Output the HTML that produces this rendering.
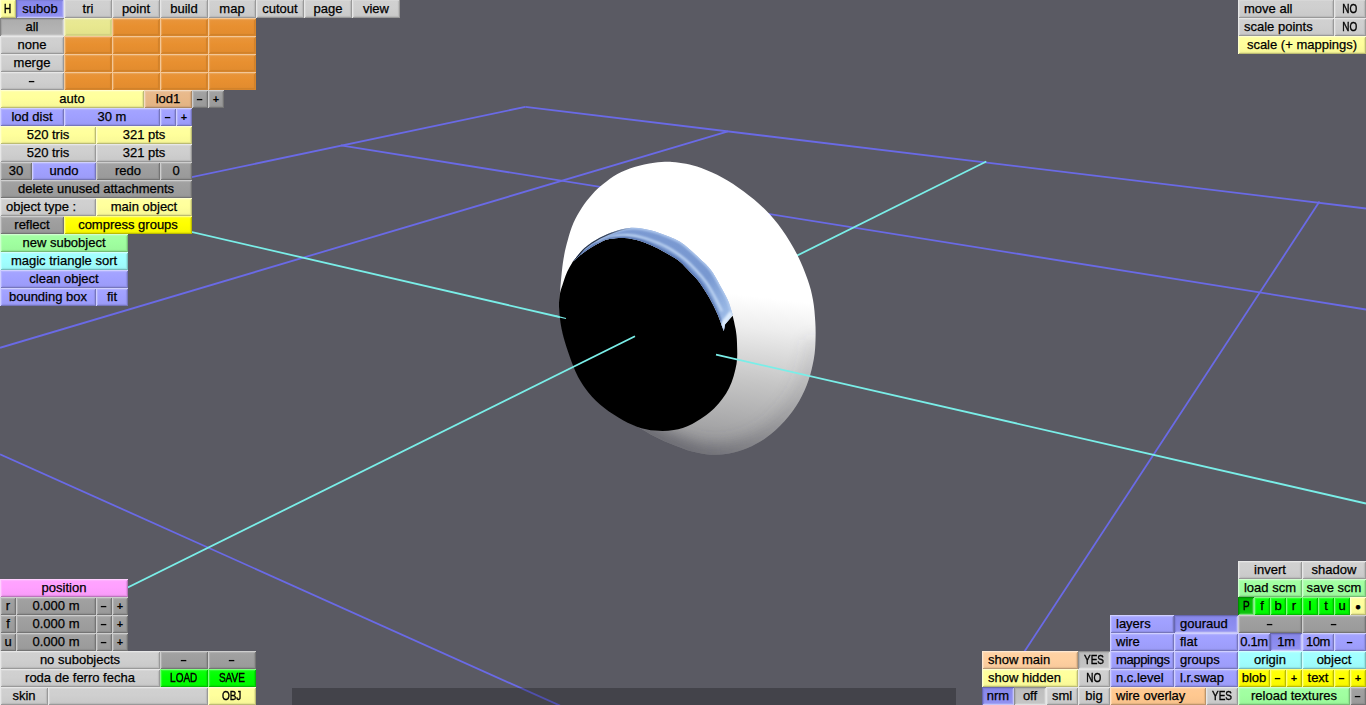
<!DOCTYPE html>
<html><head><meta charset="utf-8"><title>editor</title>
<style>
html,body{margin:0;padding:0}
body{width:1366px;height:705px;overflow:hidden;background:#5a5a63;position:relative;font-family:"Liberation Sans",sans-serif;font-size:13px;color:#000}
#scene{position:absolute;left:0;top:0}
.b{position:absolute;height:18px;box-sizing:border-box;text-align:center;-webkit-text-stroke:0.25px;line-height:18px;white-space:nowrap;overflow:hidden;letter-spacing:0}
.l{text-align:left;padding-left:6px}
.u{display:inline-block;transform:scaleX(.77);-webkit-text-stroke:.45px}
.p{font-size:11px;font-weight:bold;-webkit-text-stroke:0}
.n{display:inline-block;transform:scaleX(.85);font-weight:bold;-webkit-text-stroke:0}
.cg{background:linear-gradient(#d1d1d1,#cfcfcf 45%,#c8c8c8);box-shadow:inset 1px 1px 0 #e7e7e7,inset -1px -1px 0 #999999,inset 2px 2px 1px #d8d8d8,inset -2px -2px 1px #bababa}
.cg.pr{background:linear-gradient(#c8c8c8,#cfcfcf 55%,#d1d1d1);box-shadow:inset 1px 1px 0 #999999,inset -1px -1px 0 #e7e7e7,inset 2px 2px 1px #bababa,inset -2px -2px 1px #d8d8d8}
.cd{background:linear-gradient(#a3a3a3,#9e9e9e 45%,#999999);box-shadow:inset 1px 1px 0 #cecece,inset -1px -1px 0 #747474,inset 2px 2px 1px #b1b1b1,inset -2px -2px 1px #8e8e8e}
.cd.pr{background:linear-gradient(#999999,#9e9e9e 55%,#a3a3a3);box-shadow:inset 1px 1px 0 #747474,inset -1px -1px 0 #cecece,inset 2px 2px 1px #8e8e8e,inset -2px -2px 1px #b1b1b1}
.cm{background:linear-gradient(#c5c5c5,#c2c2c2 45%,#bcbcbc);box-shadow:inset 1px 1px 0 #e0e0e0,inset -1px -1px 0 #8f8f8f,inset 2px 2px 1px #cecece,inset -2px -2px 1px #aeaeae}
.cm.pr{background:linear-gradient(#bcbcbc,#c2c2c2 55%,#c5c5c5);box-shadow:inset 1px 1px 0 #8f8f8f,inset -1px -1px 0 #e0e0e0,inset 2px 2px 1px #aeaeae,inset -2px -2px 1px #cecece}
.ca{background:linear-gradient(#b6b6b6,#b2b2b2 45%,#acacac);box-shadow:inset 1px 1px 0 #d8d8d8,inset -1px -1px 0 #838383,inset 2px 2px 1px #c1c1c1,inset -2px -2px 1px #a0a0a0}
.ca.pr{background:linear-gradient(#acacac,#b2b2b2 55%,#b6b6b6);box-shadow:inset 1px 1px 0 #838383,inset -1px -1px 0 #d8d8d8,inset 2px 2px 1px #a0a0a0,inset -2px -2px 1px #c1c1c1}
.cy{background:linear-gradient(#ffffa1,#ffff9c 45%,#f7f797);box-shadow:inset 1px 1px 0 #ffffcd,inset -1px -1px 0 #bcbc73,inset 2px 2px 1px #ffffaf,inset -2px -2px 1px #e5e58c}
.cy.pr{background:linear-gradient(#f7f797,#ffff9c 55%,#ffffa1);box-shadow:inset 1px 1px 0 #bcbc73,inset -1px -1px 0 #ffffcd,inset 2px 2px 1px #e5e58c,inset -2px -2px 1px #ffffaf}
.cy2{background:linear-gradient(#ffff0f,#ffff00 45%,#f7f700);box-shadow:inset 1px 1px 0 #ffff7f,inset -1px -1px 0 #bcbc00,inset 2px 2px 1px #ffff32,inset -2px -2px 1px #e5e500}
.cy2.pr{background:linear-gradient(#f7f700,#ffff00 55%,#ffff0f);box-shadow:inset 1px 1px 0 #bcbc00,inset -1px -1px 0 #ffff7f,inset 2px 2px 1px #e5e500,inset -2px -2px 1px #ffff32}
.cb{background:linear-gradient(#a5a5ff,#a0a0ff 45%,#9b9bf7);box-shadow:inset 1px 1px 0 #cfcfff,inset -1px -1px 0 #7676bc,inset 2px 2px 1px #b3b3ff,inset -2px -2px 1px #9090e5}
.cb.pr{background:linear-gradient(#9b9bf7,#a0a0ff 55%,#a5a5ff);box-shadow:inset 1px 1px 0 #7676bc,inset -1px -1px 0 #cfcfff,inset 2px 2px 1px #9090e5,inset -2px -2px 1px #b3b3ff}
.cb2{background:linear-gradient(#9292f0,#8c8cf0 45%,#8787e8);box-shadow:inset 1px 1px 0 #c5c5f7,inset -1px -1px 0 #6767b1,inset 2px 2px 1px #a3a3f3,inset -2px -2px 1px #7e7ed8}
.cb2.pr{background:linear-gradient(#8787e8,#8c8cf0 55%,#9292f0);box-shadow:inset 1px 1px 0 #6767b1,inset -1px -1px 0 #c5c5f7,inset 2px 2px 1px #7e7ed8,inset -2px -2px 1px #a3a3f3}
.co{background:linear-gradient(#e9963c,#e89030 45%,#e18b2e);box-shadow:inset 1px 1px 0 #f3c797,inset -1px -1px 0 #d7852c,inset 2px 2px 1px #eca659,inset -2px -2px 1px #d0812b}
.co.pr{background:linear-gradient(#e18b2e,#e89030 55%,#e9963c);box-shadow:inset 1px 1px 0 #d7852c,inset -1px -1px 0 #f3c797,inset 2px 2px 1px #d0812b,inset -2px -2px 1px #eca659}
.cly{background:linear-gradient(#e9e996,#e8e890 45%,#e1e18b);box-shadow:inset 1px 1px 0 #f3f3c7,inset -1px -1px 0 #d7d785,inset 2px 2px 1px #ececa6,inset -2px -2px 1px #d0d081}
.cly.pr{background:linear-gradient(#e1e18b,#e8e890 55%,#e9e996);box-shadow:inset 1px 1px 0 #d7d785,inset -1px -1px 0 #f3f3c7,inset 2px 2px 1px #d0d081,inset -2px -2px 1px #ececa6}
.ct{background:linear-gradient(#e9bc8f,#e8b888 45%,#e1b283);box-shadow:inset 1px 1px 0 #f3dbc3,inset -1px -1px 0 #ab8864,inset 2px 2px 1px #ecc69f,inset -2px -2px 1px #d0a57a}
.ct.pr{background:linear-gradient(#e1b283,#e8b888 55%,#e9bc8f);box-shadow:inset 1px 1px 0 #ab8864,inset -1px -1px 0 #f3dbc3,inset 2px 2px 1px #d0a57a,inset -2px -2px 1px #ecc69f}
.cg2{background:linear-gradient(#a5ffa5,#a0ffa0 45%,#9bf79b);box-shadow:inset 1px 1px 0 #cfffcf,inset -1px -1px 0 #76bc76,inset 2px 2px 1px #b3ffb3,inset -2px -2px 1px #90e590}
.cg2.pr{background:linear-gradient(#9bf79b,#a0ffa0 55%,#a5ffa5);box-shadow:inset 1px 1px 0 #76bc76,inset -1px -1px 0 #cfffcf,inset 2px 2px 1px #90e590,inset -2px -2px 1px #b3ffb3}
.cc{background:linear-gradient(#a5ffff,#a0ffff 45%,#9bf7f7);box-shadow:inset 1px 1px 0 #cfffff,inset -1px -1px 0 #76bcbc,inset 2px 2px 1px #b3ffff,inset -2px -2px 1px #90e5e5}
.cc.pr{background:linear-gradient(#9bf7f7,#a0ffff 55%,#a5ffff);box-shadow:inset 1px 1px 0 #76bcbc,inset -1px -1px 0 #cfffff,inset 2px 2px 1px #90e5e5,inset -2px -2px 1px #b3ffff}
.cp{background:linear-gradient(#ffa5ff,#ffa0ff 45%,#f79bf7);box-shadow:inset 1px 1px 0 #ffcfff,inset -1px -1px 0 #bc76bc,inset 2px 2px 1px #ffb3ff,inset -2px -2px 1px #e590e5}
.cp.pr{background:linear-gradient(#f79bf7,#ffa0ff 55%,#ffa5ff);box-shadow:inset 1px 1px 0 #bc76bc,inset -1px -1px 0 #ffcfff,inset 2px 2px 1px #e590e5,inset -2px -2px 1px #ffb3ff}
.cl2{background:linear-gradient(#0fff0f,#00ff00 45%,#00f700);box-shadow:inset 1px 1px 0 #7fff7f,inset -1px -1px 0 #00bc00,inset 2px 2px 1px #32ff32,inset -2px -2px 1px #00e500}
.cl2.pr{background:linear-gradient(#00f700,#00ff00 55%,#0fff0f);box-shadow:inset 1px 1px 0 #00bc00,inset -1px -1px 0 #7fff7f,inset 2px 2px 1px #00e500,inset -2px -2px 1px #32ff32}
.ck2{background:linear-gradient(#0fc30f,#00c000 45%,#00ba00);box-shadow:inset 1px 1px 0 #7fdf7f,inset -1px -1px 0 #008e00,inset 2px 2px 1px #32cc32,inset -2px -2px 1px #00ac00}
.ck2.pr{background:linear-gradient(#00ba00,#00c000 55%,#0fc30f);box-shadow:inset 1px 1px 0 #008e00,inset -1px -1px 0 #7fdf7f,inset 2px 2px 1px #00ac00,inset -2px -2px 1px #32cc32}
.cs{background:linear-gradient(#ffd2a5,#ffd0a0 45%,#f7c99b);box-shadow:inset 1px 1px 0 #ffe7cf,inset -1px -1px 0 #bc9976,inset 2px 2px 1px #ffd9b3,inset -2px -2px 1px #e5bb90}
.cs.pr{background:linear-gradient(#f7c99b,#ffd0a0 55%,#ffd2a5);box-shadow:inset 1px 1px 0 #bc9976,inset -1px -1px 0 #ffe7cf,inset 2px 2px 1px #e5bb90,inset -2px -2px 1px #ffd9b3}
.cw{background:linear-gradient(#ffcb96,#ffc890 45%,#f7c28b);box-shadow:inset 1px 1px 0 #ffe3c7,inset -1px -1px 0 #bc946a,inset 2px 2px 1px #ffd3a6,inset -2px -2px 1px #e5b481}
.cw.pr{background:linear-gradient(#f7c28b,#ffc890 55%,#ffcb96);box-shadow:inset 1px 1px 0 #bc946a,inset -1px -1px 0 #ffe3c7,inset 2px 2px 1px #e5b481,inset -2px -2px 1px #ffd3a6}
</style></head><body>
<svg id="scene" width="1366" height="705" viewBox="0 0 1366 705">
<defs>
<linearGradient id="wg" gradientUnits="userSpaceOnUse" x1="700" y1="290" x2="680" y2="460">
<stop offset="0" stop-color="#ffffff"/><stop offset="0.18" stop-color="#eeeeee"/><stop offset="0.33" stop-color="#dadada"/><stop offset="0.5" stop-color="#c5c5c5"/><stop offset="0.68" stop-color="#b1b1b2"/><stop offset="0.85" stop-color="#9d9d9f"/><stop offset="1" stop-color="#8b8b8f"/>
</linearGradient>
<radialGradient id="dg" gradientUnits="userSpaceOnUse" cx="600" cy="450" r="170">
<stop offset="0" stop-color="#5a5a63" stop-opacity="1"/><stop offset="0.3" stop-color="#5a5a63" stop-opacity="0.95"/><stop offset="0.6" stop-color="#5a5a63" stop-opacity="0.4"/><stop offset="1" stop-color="#5a5a63" stop-opacity="0"/>
</radialGradient>
<linearGradient id="bg1" gradientUnits="userSpaceOnUse" x1="600" y1="235" x2="735" y2="325">
<stop offset="0" stop-color="#7c9ad2"/><stop offset="0.7" stop-color="#7898d0"/><stop offset="1" stop-color="#a8c6ee"/>
</linearGradient>
<filter id="bl9" x="-20%" y="-20%" width="140%" height="140%"><feGaussianBlur stdDeviation="8"/></filter>
<filter id="bl1" x="-20%" y="-20%" width="140%" height="140%"><feGaussianBlur stdDeviation="0.8"/></filter>
<linearGradient id="eg" gradientUnits="userSpaceOnUse" x1="820" y1="0" x2="580" y2="0">
<stop offset="0" stop-color="#50505a" stop-opacity="0.12"/><stop offset="0.2" stop-color="#50505a" stop-opacity="0.3"/><stop offset="0.45" stop-color="#50505a" stop-opacity="0.6"/><stop offset="0.75" stop-color="#50505a" stop-opacity="0.8"/><stop offset="1" stop-color="#50505a" stop-opacity="0.9"/>
</linearGradient>
<linearGradient id="dkg" gradientUnits="userSpaceOnUse" x1="572" y1="0" x2="632" y2="0">
<stop offset="0" stop-color="#0c1018" stop-opacity="0.9"/><stop offset="0.6" stop-color="#0c1018" stop-opacity="0.7"/><stop offset="1" stop-color="#0c1018" stop-opacity="0"/>
</linearGradient>
<clipPath id="wc"><path d="M672.0,161.9C677.3,162.1 681.1,162.8 686.0,163.8C690.9,164.8 695.2,165.8 701.3,168.1C707.4,170.4 715.5,173.8 722.6,177.7C729.7,181.6 736.7,186.2 743.8,191.5C750.9,196.8 758.7,203.2 765.1,209.6C771.5,216.0 776.8,222.4 782.1,229.8C787.4,237.2 792.7,246.0 797.0,254.3C801.3,262.6 805.0,272.2 807.7,279.8C810.4,287.4 811.7,293.0 813.0,300.0C814.3,307.0 814.9,315.3 815.3,322.0C815.7,328.7 815.7,333.9 815.5,340.0C815.3,346.1 815.1,351.6 813.9,358.4C812.7,365.2 810.8,373.5 808.4,380.6C806.0,387.7 803.2,394.1 799.2,400.9C795.2,407.7 789.9,415.0 784.4,421.2C778.9,427.4 772.1,433.4 766.0,437.8C759.9,442.2 753.6,445.3 747.5,447.9C741.4,450.5 735.2,452.3 729.1,453.4C723.0,454.5 716.9,455.0 710.7,454.7C704.6,454.4 698.4,453.2 692.2,451.6C686.1,450.0 679.9,447.6 673.8,445.1C667.6,442.6 661.3,439.9 655.3,436.8C649.2,433.8 643.5,430.1 637.5,426.8C631.5,423.5 625.1,420.8 619.0,417.0C612.9,413.2 606.2,408.9 600.6,404.0C595.0,399.1 589.9,393.6 585.6,387.5C581.3,381.4 578.3,376.6 574.6,367.7C570.9,358.8 565.8,343.4 563.3,333.8C560.8,324.2 560.4,316.5 559.8,310.0C559.2,303.5 559.6,301.3 559.9,295.0C560.2,288.7 561.1,278.7 561.8,272.0C562.5,265.3 563.2,260.3 564.2,255.0C565.2,249.7 566.3,245.4 567.8,240.1C569.3,234.8 571.0,228.5 573.4,223.1C575.8,217.7 578.9,212.2 582.0,207.5C585.1,202.8 588.4,198.6 591.9,194.7C595.4,190.8 599.0,187.5 603.2,184.1C607.5,180.7 612.2,176.9 617.4,174.1C622.6,171.3 628.2,169.0 634.4,167.1C640.5,165.2 648.0,163.7 654.3,162.8C660.6,161.9 666.7,161.7 672.0,161.9Z"/></clipPath>
</defs>

<g stroke="#6a6ae6" stroke-width="1.8" fill="none" stroke-linecap="butt">
<line x1="0" y1="217.4" x2="525.3" y2="106.9"/>
<line x1="525.3" y1="106.9" x2="1366" y2="208.5"/>
<line x1="0" y1="347.8" x2="728" y2="131.4"/>
<line x1="340.8" y1="145.4" x2="1366" y2="309.5"/>
<line x1="1319.5" y1="201.5" x2="1015" y2="666"/>
<line x1="0" y1="454.2" x2="560" y2="705.6"/>
</g>
<g stroke="#7aeee8" stroke-width="1.8" fill="none">
<line x1="986.3" y1="161.5" x2="760" y2="274"/>
</g>
<line x1="0" y1="187.6" x2="566" y2="318.5" stroke="#7aeee8" stroke-width="1.8"/>
<path d="M672.0,161.9C677.3,162.1 681.1,162.8 686.0,163.8C690.9,164.8 695.2,165.8 701.3,168.1C707.4,170.4 715.5,173.8 722.6,177.7C729.7,181.6 736.7,186.2 743.8,191.5C750.9,196.8 758.7,203.2 765.1,209.6C771.5,216.0 776.8,222.4 782.1,229.8C787.4,237.2 792.7,246.0 797.0,254.3C801.3,262.6 805.0,272.2 807.7,279.8C810.4,287.4 811.7,293.0 813.0,300.0C814.3,307.0 814.9,315.3 815.3,322.0C815.7,328.7 815.7,333.9 815.5,340.0C815.3,346.1 815.1,351.6 813.9,358.4C812.7,365.2 810.8,373.5 808.4,380.6C806.0,387.7 803.2,394.1 799.2,400.9C795.2,407.7 789.9,415.0 784.4,421.2C778.9,427.4 772.1,433.4 766.0,437.8C759.9,442.2 753.6,445.3 747.5,447.9C741.4,450.5 735.2,452.3 729.1,453.4C723.0,454.5 716.9,455.0 710.7,454.7C704.6,454.4 698.4,453.2 692.2,451.6C686.1,450.0 679.9,447.6 673.8,445.1C667.6,442.6 661.3,439.9 655.3,436.8C649.2,433.8 643.5,430.1 637.5,426.8C631.5,423.5 625.1,420.8 619.0,417.0C612.9,413.2 606.2,408.9 600.6,404.0C595.0,399.1 589.9,393.6 585.6,387.5C581.3,381.4 578.3,376.6 574.6,367.7C570.9,358.8 565.8,343.4 563.3,333.8C560.8,324.2 560.4,316.5 559.8,310.0C559.2,303.5 559.6,301.3 559.9,295.0C560.2,288.7 561.1,278.7 561.8,272.0C562.5,265.3 563.2,260.3 564.2,255.0C565.2,249.7 566.3,245.4 567.8,240.1C569.3,234.8 571.0,228.5 573.4,223.1C575.8,217.7 578.9,212.2 582.0,207.5C585.1,202.8 588.4,198.6 591.9,194.7C595.4,190.8 599.0,187.5 603.2,184.1C607.5,180.7 612.2,176.9 617.4,174.1C622.6,171.3 628.2,169.0 634.4,167.1C640.5,165.2 648.0,163.7 654.3,162.8C660.6,161.9 666.7,161.7 672.0,161.9Z" fill="url(#wg)"/>
<g clip-path="url(#wc)"><path d="M813.0,300.0C813.4,303.7 814.9,315.3 815.3,322.0C815.7,328.7 815.7,333.9 815.5,340.0C815.3,346.1 815.1,351.6 813.9,358.4C812.7,365.2 810.8,373.5 808.4,380.6C806.0,387.7 803.2,394.1 799.2,400.9C795.2,407.7 789.9,415.0 784.4,421.2C778.9,427.4 772.1,433.4 766.0,437.8C759.9,442.2 753.6,445.3 747.5,447.9C741.4,450.5 735.2,452.3 729.1,453.4C723.0,454.5 716.9,455.0 710.7,454.7C704.6,454.4 698.4,453.2 692.2,451.6C686.1,450.0 679.9,447.6 673.8,445.1C667.6,442.6 661.3,439.9 655.3,436.8C649.2,433.8 643.5,430.1 637.5,426.8C631.5,423.5 625.1,420.8 619.0,417.0C612.9,413.2 606.2,408.9 600.6,404.0C595.0,399.1 588.1,390.2 585.6,387.5" fill="none" stroke="#50505a" stroke-opacity="0" stroke-width="14" filter="url(#bl9)"/><path d="M815.5,340.0C815.2,343.1 815.1,351.6 813.9,358.4C812.7,365.2 810.8,373.5 808.4,380.6C806.0,387.7 803.2,394.1 799.2,400.9C795.2,407.7 789.9,415.0 784.4,421.2C778.9,427.4 772.1,433.4 766.0,437.8C759.9,442.2 753.6,445.3 747.5,447.9C741.4,450.5 735.2,452.3 729.1,453.4C723.0,454.5 716.9,455.0 710.7,454.7C704.6,454.4 698.4,453.2 692.2,451.6C686.1,450.0 679.9,447.6 673.8,445.1C667.6,442.6 661.3,439.9 655.3,436.8C649.2,433.8 643.5,430.1 637.5,426.8C631.5,423.5 625.1,420.8 619.0,417.0C612.9,413.2 606.2,408.9 600.6,404.0C595.0,399.1 588.1,390.2 585.6,387.5" fill="none" stroke="url(#eg)" stroke-width="18" filter="url(#bl9)"/></g>
<path d="M572.9,261.6C574.9,260.0 580.3,254.8 584.8,251.7C589.3,248.6 595.6,244.9 599.7,242.8C603.8,240.7 605.5,239.9 609.6,239.1C613.7,238.3 619.5,237.7 624.5,238.0C629.5,238.3 634.4,239.3 639.4,240.8C644.4,242.3 649.3,244.5 654.3,246.8C659.3,249.1 664.9,252.2 669.2,254.7C673.5,257.2 676.5,258.8 680.0,261.7C683.5,264.6 686.7,268.5 690.0,272.0C693.3,275.5 696.6,278.4 699.9,282.9C703.2,287.4 706.9,293.5 709.9,298.8C712.9,304.1 715.5,309.3 717.8,314.7C720.1,320.1 722.8,328.3 723.8,331.0L725,324.5 L732.7,315.7C733.2,318.0 735.0,325.1 735.7,329.6C736.4,334.2 736.9,337.3 737.0,343.0C737.1,348.7 737.8,356.5 736.5,364.0C735.2,371.5 732.8,380.6 729.1,388.0C725.4,395.4 720.4,402.2 714.3,408.2C708.1,414.2 699.0,420.3 692.2,423.9C685.5,427.5 679.9,428.9 673.8,430.0C667.6,431.1 661.4,431.2 655.3,430.6C649.1,430.1 643.0,428.9 636.9,426.7C630.8,424.5 624.5,421.2 618.4,417.5C612.2,413.8 605.6,409.5 600.0,404.6C594.4,399.7 589.3,394.1 585.0,388.0C580.7,381.9 577.7,377.0 574.0,368.0C570.3,359.0 565.2,343.7 562.7,334.0C560.2,324.3 559.7,316.5 559.2,310.0C558.7,303.5 559.2,299.2 559.8,295.0C560.3,290.8 561.3,288.7 562.5,285.0C563.7,281.3 565.2,276.5 566.9,272.6C568.6,268.7 571.9,263.4 572.9,261.6Z" fill="#000"/>
<clipPath id="bc"><path d="M572.9,261.6C574.9,259.3 580.3,251.8 584.8,247.8C589.3,243.8 594.7,240.5 599.7,237.8C604.7,235.1 609.6,233.1 614.6,231.4C619.6,229.8 624.5,228.3 629.5,227.9C634.5,227.5 639.4,228.1 644.4,228.9C649.4,229.7 653.4,230.8 659.3,232.9C665.2,235.1 673.3,237.5 680.0,241.8C686.7,246.1 694.5,253.8 699.6,258.5C704.8,263.2 707.5,265.6 710.9,270.0C714.3,274.4 717.0,279.9 719.8,284.9C722.6,289.9 725.6,294.8 727.7,299.8C729.9,304.8 731.9,312.2 732.7,314.7L725,324.5 L723.8,331.0C722.8,328.3 720.1,320.1 717.8,314.7C715.5,309.3 712.9,304.1 709.9,298.8C706.9,293.5 703.2,287.4 699.9,282.9C696.6,278.4 693.3,275.5 690.0,272.0C686.7,268.5 683.5,264.6 680.0,261.7C676.5,258.8 673.5,257.2 669.2,254.7C664.9,252.2 659.3,249.1 654.3,246.8C649.3,244.5 644.4,242.3 639.4,240.8C634.4,239.3 629.5,238.3 624.5,238.0C619.5,237.7 613.7,238.3 609.6,239.1C605.5,239.9 603.8,240.7 599.7,242.8C595.6,244.9 589.3,248.6 584.8,251.7C580.3,254.8 574.9,260.0 572.9,261.6Z"/></clipPath>
<path d="M572.9,261.6C574.9,259.3 580.3,251.8 584.8,247.8C589.3,243.8 594.7,240.5 599.7,237.8C604.7,235.1 609.6,233.1 614.6,231.4C619.6,229.8 624.5,228.3 629.5,227.9C634.5,227.5 639.4,228.1 644.4,228.9C649.4,229.7 653.4,230.8 659.3,232.9C665.2,235.1 673.3,237.5 680.0,241.8C686.7,246.1 694.5,253.8 699.6,258.5C704.8,263.2 707.5,265.6 710.9,270.0C714.3,274.4 717.0,279.9 719.8,284.9C722.6,289.9 725.6,294.8 727.7,299.8C729.9,304.8 731.9,312.2 732.7,314.7L725,324.5 L723.8,331.0C722.8,328.3 720.1,320.1 717.8,314.7C715.5,309.3 712.9,304.1 709.9,298.8C706.9,293.5 703.2,287.4 699.9,282.9C696.6,278.4 693.3,275.5 690.0,272.0C686.7,268.5 683.5,264.6 680.0,261.7C676.5,258.8 673.5,257.2 669.2,254.7C664.9,252.2 659.3,249.1 654.3,246.8C649.3,244.5 644.4,242.3 639.4,240.8C634.4,239.3 629.5,238.3 624.5,238.0C619.5,237.7 613.7,238.3 609.6,239.1C605.5,239.9 603.8,240.7 599.7,242.8C595.6,244.9 589.3,248.6 584.8,251.7C580.3,254.8 574.9,260.0 572.9,261.6Z" fill="url(#bg1)"/>
<g clip-path="url(#bc)">
<path d="M572.9,261.6C574.9,259.3 580.3,251.8 584.8,247.8C589.3,243.8 594.7,240.5 599.7,237.8C604.7,235.1 609.6,233.1 614.6,231.4C619.6,229.8 624.5,228.3 629.5,227.9C634.5,227.5 639.4,228.1 644.4,228.9C649.4,229.7 653.4,230.8 659.3,232.9C665.2,235.1 673.3,237.5 680.0,241.8C686.7,246.1 694.5,253.8 699.6,258.5C704.8,263.2 707.5,265.6 710.9,270.0C714.3,274.4 717.0,279.9 719.8,284.9C722.6,289.9 725.6,294.8 727.7,299.8C729.9,304.8 731.9,312.2 732.7,314.7" fill="none" stroke="#b4ccf0" stroke-width="3" filter="url(#bl1)"/>
<path d="M597.7,242.3C600.2,241.4 607.4,237.9 612.4,236.7C617.4,235.5 622.8,235.0 627.9,235.1C633.1,235.3 638.4,236.3 643.4,237.7C648.5,239.0 653.4,241.0 658.2,243.1C663.0,245.2 667.9,247.5 672.3,250.2C676.8,252.9 681.0,256.1 685.0,259.4C689.0,262.8 692.8,266.7 696.3,270.5C699.9,274.4 703.4,278.4 706.4,282.6C709.4,286.9 712.0,291.6 714.5,296.2C717.0,300.9 720.4,308.0 721.6,310.4" fill="none" stroke="#c4daf6" stroke-width="2.2" stroke-linecap="round" filter="url(#bl1)"/>
<path d="M723.8,331.0C722.8,328.3 720.1,320.1 717.8,314.7C715.5,309.3 712.9,304.1 709.9,298.8C706.9,293.5 703.2,287.4 699.9,282.9C696.6,278.4 693.3,275.5 690.0,272.0C686.7,268.5 683.5,264.6 680.0,261.7C676.5,258.8 673.5,257.2 669.2,254.7C664.9,252.2 659.3,249.1 654.3,246.8C649.3,244.5 644.4,242.3 639.4,240.8C634.4,239.3 629.5,238.3 624.5,238.0C619.5,237.7 613.7,238.3 609.6,239.1C605.5,239.9 603.8,240.7 599.7,242.8C595.6,244.9 589.3,248.6 584.8,251.7C580.3,254.8 574.9,260.0 572.9,261.6" fill="none" stroke="#4e6ca8" stroke-width="2.5" filter="url(#bl1)"/>
<path d="M572.9,261.6C574.9,259.3 580.3,251.8 584.8,247.8C589.3,243.8 594.7,240.5 599.7,237.8C604.7,235.1 609.6,233.1 614.6,231.4C619.6,229.8 624.5,228.3 629.5,227.9C634.5,227.5 641.9,228.7 644.4,228.9" fill="none" stroke="url(#dkg)" stroke-width="2.2"/>
<path d="M733.5,314.5 L725.5,325 L724,332 L720.5,326 L722,321 L730,311Z" fill="#dcebfc" filter="url(#bl1)"/>
</g>

<line x1="556" y1="316.2" x2="566" y2="318.5" stroke="#7aeee8" stroke-width="1.2"/>
<g stroke="#7aeee8" stroke-width="1.8" fill="none">
<line x1="0" y1="650.8" x2="635" y2="336.3"/>
<line x1="716" y1="354.6" x2="1366" y2="503.5"/>
</g>
<rect x="292" y="688" width="664" height="17" fill="#000" fill-opacity="0.25"/>
<line x1="292" y1="585.3" x2="560" y2="705.6" stroke="#6a6ae6" stroke-width="1.8" opacity="0"/>
</svg>
<div id="ui">
<div class="b cy" style="left:0px;top:-1px;width:16px;height:19px;padding-top:1px"><span class="u">H</span></div>
<div class="b cb2 pr" style="left:16px;top:-1px;width:48px;height:19px;padding-top:1px">subob</div>
<div class="b cg" style="left:64px;top:-1px;width:48px;height:19px;padding-top:1px">tri</div>
<div class="b cg" style="left:112px;top:-1px;width:48px;height:19px;padding-top:1px">point</div>
<div class="b cg" style="left:160px;top:-1px;width:48px;height:19px;padding-top:1px">build</div>
<div class="b cg" style="left:208px;top:-1px;width:48px;height:19px;padding-top:1px">map</div>
<div class="b cg" style="left:256px;top:-1px;width:48px;height:19px;padding-top:1px">cutout</div>
<div class="b cg" style="left:304px;top:-1px;width:48px;height:19px;padding-top:1px">page</div>
<div class="b cg" style="left:352px;top:-1px;width:48px;height:19px;padding-top:1px">view</div>
<div class="b ca pr" style="left:0px;top:18px;width:64px">all</div>
<div class="b cly" style="left:64px;top:18px;width:48px"></div>
<div class="b co" style="left:112px;top:18px;width:48px"></div>
<div class="b co" style="left:160px;top:18px;width:48px"></div>
<div class="b co" style="left:208px;top:18px;width:48px"></div>
<div class="b cg" style="left:0px;top:36px;width:64px">none</div>
<div class="b co" style="left:64px;top:36px;width:48px"></div>
<div class="b co" style="left:112px;top:36px;width:48px"></div>
<div class="b co" style="left:160px;top:36px;width:48px"></div>
<div class="b co" style="left:208px;top:36px;width:48px"></div>
<div class="b cg" style="left:0px;top:54px;width:64px">merge</div>
<div class="b co" style="left:64px;top:54px;width:48px"></div>
<div class="b co" style="left:112px;top:54px;width:48px"></div>
<div class="b co" style="left:160px;top:54px;width:48px"></div>
<div class="b co" style="left:208px;top:54px;width:48px"></div>
<div class="b cg" style="left:0px;top:72px;width:64px"><span class="n">–</span></div>
<div class="b co" style="left:64px;top:72px;width:48px"></div>
<div class="b co" style="left:112px;top:72px;width:48px"></div>
<div class="b co" style="left:160px;top:72px;width:48px"></div>
<div class="b co" style="left:208px;top:72px;width:48px"></div>
<div class="b cy" style="left:0px;top:90px;width:144px">auto</div>
<div class="b ct" style="left:144px;top:90px;width:48px">lod1</div>
<div class="b cd" style="left:192px;top:90px;width:16px"><span class="n">–</span></div>
<div class="b cd" style="left:208px;top:90px;width:16px"><span class="p">+</span></div>
<div class="b cb" style="left:0px;top:108px;width:64px">lod dist</div>
<div class="b cb" style="left:64px;top:108px;width:96px">30 m</div>
<div class="b cb" style="left:160px;top:108px;width:16px"><span class="n">–</span></div>
<div class="b cb" style="left:176px;top:108px;width:16px"><span class="p">+</span></div>
<div class="b cy" style="left:0px;top:126px;width:96px">520 tris</div>
<div class="b cy" style="left:96px;top:126px;width:96px">321 pts</div>
<div class="b cg" style="left:0px;top:144px;width:96px">520 tris</div>
<div class="b cg" style="left:96px;top:144px;width:96px">321 pts</div>
<div class="b cd" style="left:0px;top:162px;width:32px">30</div>
<div class="b cb" style="left:32px;top:162px;width:64px">undo</div>
<div class="b cd" style="left:96px;top:162px;width:64px">redo</div>
<div class="b cd" style="left:160px;top:162px;width:32px">0</div>
<div class="b cd" style="left:0px;top:180px;width:192px">delete unused attachments</div>
<div class="b cg l" style="left:0px;top:198px;width:96px">object type :</div>
<div class="b cy" style="left:96px;top:198px;width:96px">main object</div>
<div class="b cd" style="left:0px;top:216px;width:64px">reflect</div>
<div class="b cy2" style="left:64px;top:216px;width:128px">compress groups</div>
<div class="b cg2" style="left:0px;top:234px;width:128px">new subobject</div>
<div class="b cc" style="left:0px;top:252px;width:128px">magic triangle sort</div>
<div class="b cb" style="left:0px;top:270px;width:128px">clean object</div>
<div class="b cb" style="left:0px;top:288px;width:96px">bounding box</div>
<div class="b cb" style="left:96px;top:288px;width:32px">fit</div>
<div class="b cp" style="left:0px;top:579px;width:128px">position</div>
<div class="b cd" style="left:0px;top:597px;width:16px">r</div>
<div class="b cd" style="left:16px;top:597px;width:80px">0.000 m</div>
<div class="b cd" style="left:96px;top:597px;width:16px"><span class="n">–</span></div>
<div class="b cd" style="left:112px;top:597px;width:16px"><span class="p">+</span></div>
<div class="b cd" style="left:0px;top:615px;width:16px">f</div>
<div class="b cd" style="left:16px;top:615px;width:80px">0.000 m</div>
<div class="b cd" style="left:96px;top:615px;width:16px"><span class="n">–</span></div>
<div class="b cd" style="left:112px;top:615px;width:16px"><span class="p">+</span></div>
<div class="b cd" style="left:0px;top:633px;width:16px">u</div>
<div class="b cd" style="left:16px;top:633px;width:80px">0.000 m</div>
<div class="b cd" style="left:96px;top:633px;width:16px"><span class="n">–</span></div>
<div class="b cd" style="left:112px;top:633px;width:16px"><span class="p">+</span></div>
<div class="b cg" style="left:0px;top:651px;width:160px">no subobjects</div>
<div class="b cd" style="left:160px;top:651px;width:48px"><span class="n">–</span></div>
<div class="b cd" style="left:208px;top:651px;width:48px"><span class="n">–</span></div>
<div class="b cg" style="left:0px;top:669px;width:160px">roda de ferro fecha</div>
<div class="b cl2" style="left:160px;top:669px;width:48px"><span class="u">LOAD</span></div>
<div class="b cl2" style="left:208px;top:669px;width:48px"><span class="u">SAVE</span></div>
<div class="b cg" style="left:0px;top:687px;width:48px">skin</div>
<div class="b cg" style="left:48px;top:687px;width:160px"></div>
<div class="b cy" style="left:208px;top:687px;width:48px"><span class="u">OBJ</span></div>
<div class="b cg l" style="left:1238px;top:-1px;width:96px;height:19px;padding-top:1px">move all</div>
<div class="b cg" style="left:1334px;top:-1px;width:32px;height:19px;padding-top:1px"><span class="u">NO</span></div>
<div class="b cg l" style="left:1238px;top:18px;width:96px">scale points</div>
<div class="b cg" style="left:1334px;top:18px;width:32px"><span class="u">NO</span></div>
<div class="b cy" style="left:1238px;top:36px;width:128px">scale (+ mappings)</div>
<div class="b cg" style="left:1238px;top:561px;width:64px">invert</div>
<div class="b cg" style="left:1302px;top:561px;width:64px">shadow</div>
<div class="b cg2" style="left:1238px;top:579px;width:64px">load scm</div>
<div class="b cg2" style="left:1302px;top:579px;width:64px">save scm</div>
<div class="b ck2 pr" style="left:1238px;top:597px;width:16px"><span class="u">P</span></div>
<div class="b cl2" style="left:1254px;top:597px;width:16px">f</div>
<div class="b cl2" style="left:1270px;top:597px;width:16px">b</div>
<div class="b cl2" style="left:1286px;top:597px;width:16px">r</div>
<div class="b cl2" style="left:1302px;top:597px;width:16px">l</div>
<div class="b cl2" style="left:1318px;top:597px;width:16px">t</div>
<div class="b cl2" style="left:1334px;top:597px;width:16px">u</div>
<div class="b cy" style="left:1350px;top:597px;width:16px"><span style="font-size:10px">●</span></div>
<div class="b cb l" style="left:1110px;top:615px;width:64px">layers</div>
<div class="b cb2 pr l" style="left:1174px;top:615px;width:64px">gouraud</div>
<div class="b cd" style="left:1238px;top:615px;width:64px"><span class="n">–</span></div>
<div class="b cd" style="left:1302px;top:615px;width:64px"><span class="n">–</span></div>
<div class="b cb l" style="left:1110px;top:633px;width:64px">wire</div>
<div class="b cb l" style="left:1174px;top:633px;width:64px">flat</div>
<div class="b cb" style="left:1238px;top:633px;width:32px;letter-spacing:-0.4px">0.1m</div>
<div class="b cb2 pr" style="left:1270px;top:633px;width:32px;letter-spacing:-0.4px">1m</div>
<div class="b cb" style="left:1302px;top:633px;width:32px;letter-spacing:-0.4px">10m</div>
<div class="b cb" style="left:1334px;top:633px;width:32px"><span class="n">–</span></div>
<div class="b cs l" style="left:982px;top:651px;width:96px">show main</div>
<div class="b cm pr" style="left:1078px;top:651px;width:32px"><span class="u">YES</span></div>
<div class="b cb l" style="left:1110px;top:651px;width:64px;letter-spacing:-0.35px">mappings</div>
<div class="b cb l" style="left:1174px;top:651px;width:64px">groups</div>
<div class="b cc" style="left:1238px;top:651px;width:64px">origin</div>
<div class="b cc" style="left:1302px;top:651px;width:64px">object</div>
<div class="b cy l" style="left:982px;top:669px;width:96px">show hidden</div>
<div class="b cg" style="left:1078px;top:669px;width:32px"><span class="u">NO</span></div>
<div class="b cb l" style="left:1110px;top:669px;width:64px">n.c.level</div>
<div class="b cb l" style="left:1174px;top:669px;width:64px">l.r.swap</div>
<div class="b cy2" style="left:1238px;top:669px;width:32px">blob</div>
<div class="b cy2" style="left:1270px;top:669px;width:16px"><span class="n">–</span></div>
<div class="b cy2" style="left:1286px;top:669px;width:16px"><span class="p">+</span></div>
<div class="b cy2" style="left:1302px;top:669px;width:32px">text</div>
<div class="b cy2" style="left:1334px;top:669px;width:16px"><span class="n">–</span></div>
<div class="b cy2" style="left:1350px;top:669px;width:16px"><span class="p">+</span></div>
<div class="b cb2 pr" style="left:982px;top:687px;width:32px">nrm</div>
<div class="b cm pr" style="left:1014px;top:687px;width:32px">off</div>
<div class="b cg" style="left:1046px;top:687px;width:32px">sml</div>
<div class="b cg" style="left:1078px;top:687px;width:32px">big</div>
<div class="b cw l" style="left:1110px;top:687px;width:96px">wire overlay</div>
<div class="b cg" style="left:1206px;top:687px;width:32px"><span class="u">YES</span></div>
<div class="b cg2" style="left:1238px;top:687px;width:112px">reload textures</div>
<div class="b cd" style="left:1350px;top:687px;width:16px"><span class="n">–</span></div>
</div></body></html>
